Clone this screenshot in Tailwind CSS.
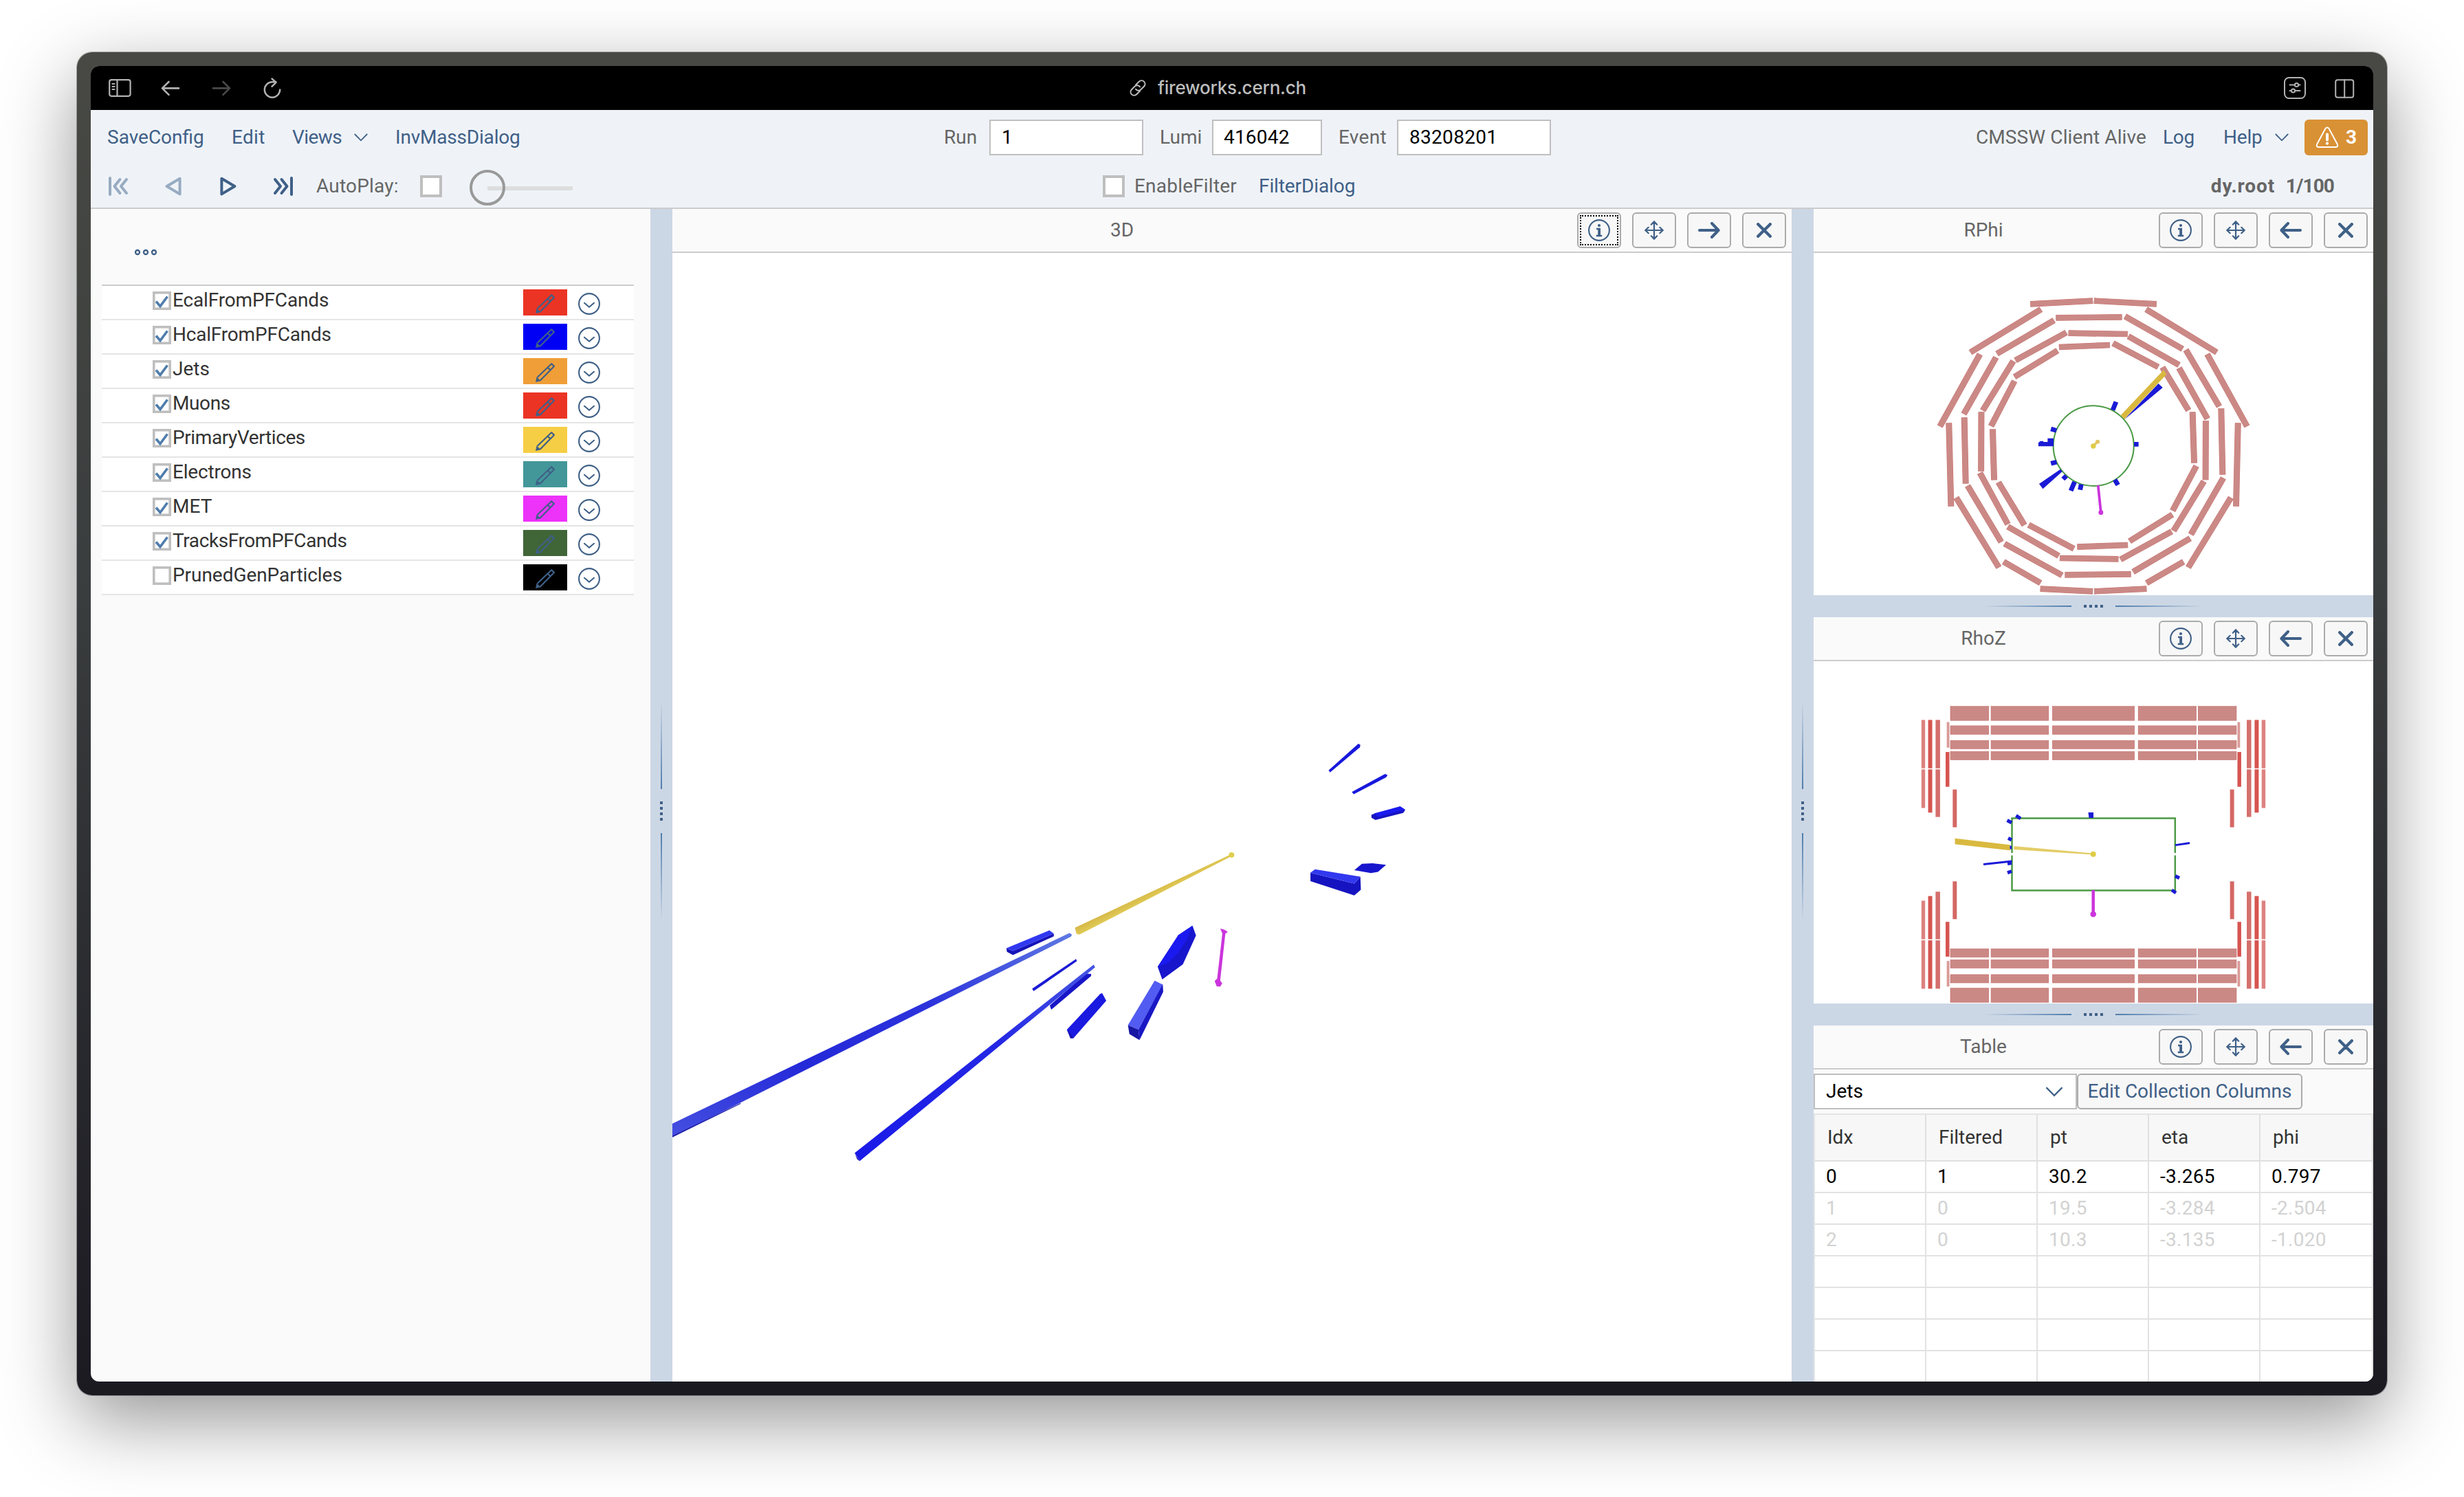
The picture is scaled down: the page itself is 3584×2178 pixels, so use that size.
<!DOCTYPE html>
<html lang="en">
<head>
<meta charset="utf-8">
<title>fireworks.cern.ch</title>
<script src="https://cdn.jsdelivr.net/npm/@tailwindcss/browser@4"></script>
</head>
<body class="h-[2178px] w-[3584px] overflow-hidden bg-white px-[112px] pt-[76px] font-[Roboto,sans-serif] text-[28px] leading-[32px] text-[#666666]">

<svg class="hidden">
  <defs>
    <symbol id="i-info" viewBox="0 0 32 32"><circle cx="16" cy="16" r="14.9" fill="none" stroke="currentColor" stroke-width="2.1"/><circle cx="16" cy="9" r="2.1" fill="currentColor"/><path d="M12 12.8h6v10h2.2v2.4h-8.4v-2.4h2.4v-7.6H12z" fill="currentColor"/></symbol>
    <symbol id="i-move" viewBox="0 0 28 28"><path d="M14 1.5v25M1.5 14h25M9.8 5.7 14 1.3l4.2 4.4M9.8 22.3l4.2 4.4 4.2-4.4M5.7 9.8 1.3 14l4.4 4.2M22.3 9.8l4.4 4.2-4.4 4.2" fill="none" stroke="currentColor" stroke-width="2.2" stroke-linecap="round"/></symbol>
    <symbol id="i-left" viewBox="0 0 32 24"><path d="M30 12H3M12 2 2.4 12 12 22" fill="none" stroke="currentColor" stroke-width="4" stroke-linecap="round" stroke-linejoin="round"/></symbol>
    <symbol id="i-right" viewBox="0 0 32 24"><path d="M2 12h27M20 2l9.600 10L20 22" fill="none" stroke="currentColor" stroke-width="4" stroke-linecap="round" stroke-linejoin="round"/></symbol>
    <symbol id="i-close" viewBox="0 0 22 22"><path d="M2.200 2.200 19.800 19.800M19.800 2.200 2.200 19.800" fill="none" stroke="currentColor" stroke-width="4.300" stroke-linecap="round"/></symbol>
    <symbol id="i-chev" viewBox="0 0 20 12"><path d="M1.300 1.500 10 10.300 18.700 1.500" fill="none" stroke="currentColor" stroke-width="1.800" stroke-linecap="round"/></symbol>
    <symbol id="i-pencil" viewBox="-1 -1 30 30"><path d="M2.500 21 23.200 1.200 26.900 4.900 6.800 25.500M17.600 6.600l4.200 4.200" fill="none" stroke="currentColor" stroke-width="2.200" stroke-linejoin="round"/><path d="M1.500 20.500 8 26.300 0 28z" fill="currentColor"/></symbol>
    <symbol id="i-down" viewBox="0 0 32 32"><circle cx="16" cy="16" r="14.900" fill="none" stroke="currentColor" stroke-width="2.100"/><path d="M9 14.800 16 20.800 23 14.800" fill="none" stroke="currentColor" stroke-width="2.100" stroke-linecap="round" stroke-linejoin="round"/></symbol>
  </defs>
</svg>

<div class="h-[1954px] w-[3360px] rounded-[22px] bg-linear-to-b from-[#484944] from-0% via-[#3a3d3e] via-40% to-[#1b1a21] to-100% p-[20px] shadow-[0_36px_110px_rgba(0,0,0,0.42),0_0_0_1px_#b4b4b4]">
<div class="flex h-[1914px] w-[3320px] flex-col overflow-hidden rounded-[12px] bg-[#fafafa]">

  <!-- browser bar -->
  <div class="relative flex h-[64px] shrink-0 items-center justify-between bg-black pr-[27px] pl-[26px] text-[#b2b2b2]">
    <svg class="h-[40px] w-[260px]" viewBox="158 108 260 40" fill="none" stroke="currentColor" stroke-width="2.200" stroke-linecap="round" stroke-linejoin="round">
      <rect x="159.200" y="116.200" width="30.400" height="23.600" rx="3"/><path d="M170.500 116v24M163.500 122h3M163.500 126h3M163.500 130h3"/>
      <path d="M260 128.400H236.500M245.500 119l-9.500 9.400 9.500 9.400" stroke-width="2.600"/>
      <path d="M310 128.400h23.500M324.500 119l9.500 9.400-9.500 9.400" stroke="#4a4a4a" stroke-width="2.600"/>
      <path d="M407.200 130.500a11.200 11.200 0 1 1-11.200-11.200h5.500M395.500 114.500l6 5.300-6 6" stroke-width="2.400"/>
    </svg>
    <div class="absolute inset-x-0 flex items-center justify-center gap-[16px] pr-[42px] font-[Inter,sans-serif] text-[26px] font-medium tracking-[-0.2px] text-[#bdbdbd]">
      <svg class="h-[26px] w-[26px]" viewBox="0 0 26 26" fill="none" stroke="currentColor" stroke-width="2" stroke-linecap="round"><path d="M10 8.500 14.800 3.700a5 5 0 0 1 7.200 7.100L17.500 15.300a5 5 0 0 1-7.600-.6M16 17.500 11.200 22.300a5 5 0 0 1-7.200-7.100L8.500 10.700a5 5 0 0 1 7.600.6"/></svg>
      <span>fireworks.cern.ch</span>
    </div>
    <svg class="h-[40px] w-[104px]" viewBox="3321 108 104 40" fill="none" stroke="currentColor" stroke-width="2" stroke-linecap="round">
      <rect x="3323" y="113" width="30" height="30" rx="6.500"/><path d="M3330.500 123.500h7M3343.500 123.500h2M3330.500 132h2M3338.500 132h7"/><circle cx="3340.500" cy="123.500" r="2.600"/><circle cx="3335.500" cy="132" r="2.600"/>
      <rect x="3397.200" y="116.200" width="26" height="25.600" rx="3"/><path d="M3410.200 116v26"/>
    </svg>
  </div>

  <!-- application toolbar -->
  <div class="flex h-[144px] shrink-0 flex-col border-b-2 border-[#cccccc] bg-[#eff3f8]">
    <div class="flex h-[80px] items-center">
      <div class="flex w-[1241px] items-center pl-[24px] text-[#3f6087]">
        <span class="w-[180px]">SaveConfig</span>
        <span class="w-[89px] pl-[1px] tracking-[0.300px]">Edit</span>
        <span class="w-[90px] tracking-[-0.600px]">Views</span>
        <svg class="h-[12px] w-[20px]"><use href="#i-chev"/></svg>
        <span class="ml-[40px] tracking-[-0.200px]">InvMassDialog</span>
      </div>
      <div class="flex items-center">
        <span class="w-[66px]">Run</span>
        <div class="h-[52px] w-[224px] border-2 border-[#bfbfbf] bg-white px-[16px] py-[8px] text-black">1</div>
        <span class="ml-[24px] w-[76px]">Lumi</span>
        <div class="h-[52px] w-[160px] border-2 border-[#bfbfbf] bg-white px-[15px] py-[8px] tracking-[0.200px] text-black">416042</div>
        <span class="ml-[24px] w-[85px] tracking-[0.300px]">Event</span>
        <div class="h-[52px] w-[224px] border-2 border-[#bfbfbf] bg-white px-[16px] py-[8px] tracking-[0.300px] text-black">83208201</div>
      </div>
      <div class="flex flex-1 items-center justify-end pr-[8px] text-[#3f6087]">
        <span class="w-[272px] tracking-[0.100px] text-[#666666]">CMSSW Client Alive</span>
        <span class="w-[88px] tracking-[-0.300px]">Log</span>
        <span class="w-[75px] tracking-[-0.200px]">Help</span>
        <svg class="h-[12px] w-[20px]"><use href="#i-chev"/></svg>
        <div class="ml-[23px] flex h-[52px] w-[92px] items-center rounded-[6px] bg-[#d99135] pl-[16px] font-bold text-white">
          <svg class="h-[32px] w-[34px]" viewBox="0 0 34 32"><path d="M14.200 3.500 2.200 25.800q-1.600 3.900 2.300 4.200h25q3.900-.3 2.300-4.200L19.800 3.500q-2.800-3.800-5.600 0z" fill="none" stroke="currentColor" stroke-width="2"/><path d="M17 11.500v8" stroke="currentColor" stroke-width="4" stroke-linecap="round"/><circle cx="17" cy="24.700" r="2.100" fill="currentColor"/></svg>
          <span class="ml-[10px]">3</span>
        </div>
      </div>
    </div>
    <div class="flex h-[62px] items-center">
      <div class="flex w-[1472px] items-center">
        <svg class="h-[32px] w-[300px]" viewBox="132 255 300 32" fill="none" stroke="#3f6087" stroke-width="4" stroke-linecap="round" stroke-linejoin="round">
          <g stroke="#97abc1"><path d="M160 259v24M174.500 261l-8 10 8 10M184 261l-8 10 8 10"/><path d="M261.600 259.800v22.600L242.600 271z"/></g>
          <path d="M322.400 259.800v22.600L341.400 271z"/><path d="M424 259v24M400 261l8 10-8 10M409.500 261l8 10-8 10"/>
        </svg>
        <span class="ml-[28px] w-[151px] tracking-[0.200px]">AutoPlay:</span>
        <div class="h-[32px] w-[32px] border-4 border-[#bfbfbf] bg-white"></div>
        <svg class="ml-[38px] h-[56px] w-[154px]" viewBox="681 243 154 56"><rect x="709" y="271" width="124" height="6" fill="#dddddd"/><circle cx="709" cy="273" r="24" fill="none" stroke="#999999" stroke-width="4"/></svg>
      </div>
      <div class="h-[32px] w-[32px] border-4 border-[#bfbfbf] bg-white"></div>
      <span class="ml-[14px] w-[181px] tracking-[0.200px]">EnableFilter</span>
      <span class="tracking-[-0.100px] text-[#3f6087]">FilterDialog</span>
      <div class="ml-auto flex pr-[57px] font-bold">
        <span class="w-[109px] tracking-[0.900px]">dy.root</span><span class="tracking-[-0.900px]">1/100</span>
      </div>
    </div>
  </div>

  <!-- split views -->
  <div class="flex h-[1706px]">
    <div class="flex w-[814px] flex-col px-[16px] pt-[58px]">
      <svg class="ml-[46px] h-[10px] w-[36px] text-[#3f6087]" viewBox="0 0 36 10" fill="none" stroke="currentColor" stroke-width="2.300"><circle cx="6" cy="5" r="3"/><circle cx="18" cy="5" r="3"/><circle cx="30" cy="5" r="3"/></svg>
      <div id="tree" class="mt-[42px] w-[774px] border-t-2 border-[#cccccc]"></div>
    </div>

    <div class="vsplit"></div>

    <div class="flex w-[1628px] flex-col bg-white">
      <div class="view-head" data-title="3D" data-dir="right"></div>
      <svg class="h-[1642px] w-[1628px]" viewBox="978 368 1628 1642">
        <defs>
          <linearGradient id="beamA" x1="0" y1="1" x2="1" y2="0"><stop offset="0" stop-color="#4650e0"/><stop offset=".35" stop-color="#2429d8"/><stop offset=".65" stop-color="#2c33dc"/><stop offset="1" stop-color="#5f7ae2"/></linearGradient>
          <linearGradient id="beamB" x1="0" y1="1" x2="1" y2="0"><stop offset="0" stop-color="#1a1ae8"/><stop offset=".6" stop-color="#2428e4"/><stop offset="1" stop-color="#4656e4"/></linearGradient>
          <linearGradient id="jet" x1=".46" y1=".46" x2=".54" y2=".54"><stop offset="0" stop-color="#d6b848"/><stop offset="1" stop-color="#e6d45c"/></linearGradient>
        </defs>
        <g transform="translate(960 1050) scale(.73342 .43367)">
          <path fill="url(#jet)" d="M823 691 1130 447 1137 448 832 714 826 712z"/>
          <ellipse cx="1133.500" cy="447" rx="5.500" ry="9" fill="#e0cf4e"/>
          <path fill="#1614b8" d="M687 760 700 769 781 711 781 720 700 783 688 772z"/><path fill="#3038f0" d="M687 760 772 700 781 711 700 769z"/>
          <path fill="url(#beamA)" d="M20 1352 812 709 817 714 815 721 20 1397z"/><path fill="#2020a8" d="M20 1393 160 1279 160 1282 20 1398z"/>
          <path fill="#1a1ad4" d="M738 896 825 796 827 803 741 904z"/>
          <path fill="#1816c8" d="M773 952 845 845 855 846 855 853 776 966z"/>
          <path fill="url(#beamB)" d="M386 1447 860 815 863 824 396 1474z"/>
          <path fill="#1a18a8" d="M386 1447 388 1454 396 1474 391 1468z"/>
          <path fill="#1a1ae0" d="M807 1033 873 913 877 911 885 936 820 1062 814 1062z"/><path fill="#1614b0" d="M807 1033 811 1040 820 1062 814 1062z"/>
          <path fill="#525cf2" d="M928 1018 981 869 997 882 949 1033z"/><path fill="#1a18c4" d="M997 880 998 906 951 1068 949 1033z"/><path fill="#1816a4" d="M928 1018 949 1033 951 1068 931 1048z"/>
          <path fill="#1816cc" d="M987 822 1028 716 1056 684 1063 717 1037 814 996 865z"/><path fill="#1a1af0" d="M987 822 1028 716 1056 684 1045 730 1026 778 1007 810z"/>
          <path fill="#cb35dc" d="M1116 700 1122 700 1111 868 1115 878 1111 889 1104 888 1100 870 1105 862z"/><path fill="#cb35dc" d="M1111 694 1118 697 1126 705 1122 711 1115 709z"/>
          <path fill="#1818dc" d="M1326 163 1385 74 1389 78 1388 86 1329 170z"/>
          <path fill="#1818dc" d="M1372 236 1438 175 1443 179 1440 187 1376 243z"/>
          <path fill="#1614c0" d="M1411 312 1468 284 1478 296 1474 306 1419 330 1411 322z"/><path fill="#1a1af0" d="M1416 308 1468 284 1478 295 1424 319z"/>
          <path fill="#1816cc" d="M1377 498 1392 477 1413 475 1440 480 1424 504 1410 508z"/>
          <path fill="#1614c0" d="M1290 507 1377 543 1389 520 1390 564 1377 583 1290 535z"/><path fill="#3238ee" d="M1290 507 1299 495 1389 520 1377 543z"/>
        </g>
      </svg>
    </div>

    <div class="vsplit"></div>

    <div class="flex w-[814px] flex-col">
      <div class="view-head" data-title="RPhi" data-dir="left"></div>
      <svg class="h-[498px] w-[814px] shrink-0 bg-white" viewBox="2638 368 814 498">
        <g transform="translate(2780 400) scale(.34439 .33333)">
          <g id="rings" fill="none"></g>
          <ellipse cx="770" cy="746" rx="170" ry="175" fill="none" stroke="#4b9a45" stroke-width="6"/>
          <path stroke="#1a1ad6" stroke-width="20" fill="none" d="M865 554 851 590M960 739H941M590 672 613 679M590 823 614 817M641 891 655 877M674 942 690 903M713 938 718 914M860 894 873 917"/>
          <path fill="#1a1ad6" d="M537 733 545 725H558V729H576V713H601V748H537zM540 912 556 934 638 858 630 848zM898 633 1044 474 1062 492z"/>
          <path fill="#d9b93f" d="M885 612 1066 415 1078 434 900 630z"/>
          <path stroke="#cb35dc" stroke-width="11" d="M789 918 801 1037"/><circle cx="801" cy="1037" r="10" fill="#cb35dc"/>
          <path stroke="#e2c665" stroke-width="10" d="M769 746 788 727"/><circle cx="787" cy="728" r="9" fill="#e2c665"/><circle cx="769" cy="747" r="11" fill="#dfcc48"/>
        </g>
      </svg>
      <div class="hsplit"></div>
      <div class="view-head" data-title="RhoZ" data-dir="left"></div>
      <svg class="h-[498px] w-[814px] shrink-0 bg-white" viewBox="2638 962 814 498">
        <g transform="translate(2630 860) scale(.54209 .39541)">
          <g id="barrel" fill="#cb8986" stroke="#c77370" stroke-width="1.600"></g>
          <g id="endcap"></g>
          <path fill="#d9b93f" d="M394 910 542 934V954L394 931z"/>
          <path fill="#e3cd66" d="M552 938 765 965V970L552 951z"/>
        </g>
        <path fill="none" stroke="#4b9a45" stroke-width="2.500" d="M2926.500 1241V1190.500H3163.800V1241M3163.800 1244.500V1295.500H2926.500V1244.500"/>
        <circle cx="3044.700" cy="1242.800" r="4" fill="#dfcc48"/>
        <path fill="none" stroke="#1a1ad6" stroke-width="5" d="M2932.500 1186.500 2939 1191M2919.500 1193.500 2926 1197M2921 1219.500 2926 1222M2923.500 1233H2926M2920 1256.500 2926 1255.500M2920 1269.800 2926 1267.500M3164 1274.500 3170 1277.500M3159 1295 3165 1299"/>
        <path fill="#1a1ad6" d="M3037.500 1182h7.500v8h-6.500z"/>
        <path fill="none" stroke="#1a1ad6" stroke-width="2.800" d="M2885 1257.500 2926.500 1253M3164 1229.700 3185 1226.500"/>
        <path stroke="#cb35dc" stroke-width="4.500" d="M3044.700 1295V1330"/><circle cx="3044.700" cy="1330" r="4.300" fill="#cb35dc"/>
      </svg>
      <div class="hsplit"></div>
      <div class="view-head" data-title="Table" data-dir="left"></div>
      <div class="flex h-[64px] shrink-0 items-center bg-[#fafafa]">
        <div class="flex h-[52px] w-[383px] items-center justify-between border-2 border-[#bfbfbf] bg-white pr-[18px] pl-[16px] text-black">Jets<svg class="h-[15px] w-[26px] text-[#3f6087]"><use href="#i-chev"/></svg></div>
        <div class="flex h-[52px] w-[328px] items-center justify-center rounded-[6px] border-2 border-[#ababab] bg-[#f7f7f7] text-[#3f6087]">Edit Collection Columns</div>
      </div>
      <div id="table" class="grid w-[814px] grid-cols-[162px_162px_162px_162px_164px] border-t-2 border-l-2 border-[#e5e5e5]"></div>
    </div>
  </div>
</div>
</div>

<script>
// tree of event collections
const items = [['EcalFromPFCands','#eb3424',1,'tracking-[-0.150px]'],['HcalFromPFCands','#0000f5',1,'tracking-[-0.200px]'],['Jets','#f09f38',1,''],['Muons','#eb3424',1,'tracking-[-0.400px]'],['PrimaryVertices','#f6ce45',1,'tracking-[-0.400px]'],['Electrons','#439799',1,'tracking-[-0.200px]'],['MET','#ed32fa',1,''],['TracksFromPFCands','#406537',1,'tracking-[-0.400px]'],['PrunedGenParticles','#000000',0,'tracking-[-0.050px]']];
document.getElementById('tree').innerHTML = items.map(([n, c, on, t]) => `
  <div class="flex h-[50px] items-start border-b-2 border-[#e5e5e5] bg-white pl-[74px] text-[#333333]">
    <svg class="mt-[8px] h-[27px] w-[27px]" viewBox="0 0 27 27"><rect x="1.800" y="1.800" width="23.400" height="23.400" fill="#fff" stroke="#bfbfbf" stroke-width="3.600"/>${on ? '<path d="M5 14.500 11 21.500 21.500 7.500" fill="none" stroke="#4f7dac" stroke-width="3.600"/>' : ''}</svg>
    <span class="mt-[5px] ml-[2px] w-[510px] ${t}">${n}</span>
    <div class="mt-[5px] flex h-[38px] w-[64px] items-center justify-center text-[#3f6087]" style="background:${c}"><svg class="mt-[4px] h-[30px] w-[30px]"><use href="#i-pencil"/></svg></div>
    <svg class="mt-[10px] ml-[16px] h-[32px] w-[32px] text-[#3f6087]"><use href="#i-down"/></svg>
  </div>`).join('');

// view headers
document.querySelectorAll('.view-head').forEach(h => {
  const right = h.dataset.dir === 'right';
  h.className = 'flex h-[64px] shrink-0 items-center border-b-2 border-[#cccccc] bg-[#fafafa] pr-[8px]';
  const icons = [['i-info','h-[32px] w-[32px]'],['i-move','h-[28px] w-[28px]'],[right ? 'i-right' : 'i-left','h-[24px] w-[32px]'],['i-close','h-[22px] w-[22px]']];
  h.innerHTML = `<div class="mr-[8px] flex-1 text-center">${h.dataset.title}</div><div class="flex gap-[16px]">` + icons.map(([id, s], i) =>
    `<div class="relative flex h-[52px] w-[64px] items-center justify-center rounded-[6px] border-2 border-[#ababab] bg-[#f7f7f7] text-[#3f6087]"><svg class="${s}"><use href="#${id}"/></svg>${right && i === 0 ? '<div class="absolute inset-[2px] border-2 border-dotted border-black"></div>' : ''}</div>`).join('') + '</div>';
});

// splitters
const dots = '<i class="block h-[4px] w-[4px] bg-[#3f6087]"></i>'.repeat(4);
document.querySelectorAll('.vsplit').forEach(s => {
  s.className = 'flex h-[1752px] w-[32px] shrink-0 flex-col items-center justify-center bg-[#ccd7e5]';
  s.innerHTML = `<div class="h-[128px] w-[2px] bg-linear-to-t from-[#4f7dac] to-[#ccd7e5]"></div><div class="flex flex-col gap-[4px] py-[18px]">${dots}</div><div class="h-[128px] w-[2px] bg-linear-to-b from-[#4f7dac] to-[#ccd7e5]"></div>`;
});
document.querySelectorAll('.hsplit').forEach(s => {
  s.className = 'flex h-[32px] shrink-0 items-center justify-center bg-[#ccd7e5]';
  s.innerHTML = `<div class="h-[2px] w-[128px] bg-linear-to-l from-[#4f7dac] to-[#ccd7e5]"></div><div class="flex gap-[4px] px-[18px]">${dots}</div><div class="h-[2px] w-[128px] bg-linear-to-r from-[#4f7dac] to-[#ccd7e5]"></div>`;
});

// muon barrel chambers, transverse view
const bars = 'M503 127 767 113M772 113 1036 127M992 150 1290 338M1250 346 1418 661M1380 646 1372 1010M1350 972 1170 1277M1150 1252 994 1345M994 1370 773 1381M767 1381 545 1370M546 1345 390 1252M370 1277 190 972M168 1010 159 646M121 661 290 346M250 338 548 150'
 + 'M611 187 890 184M903 181 1146 323M1160 327 1301 574M1309 582 1315 872M1318 886 1181 1133M1178 1150 937 1296M928 1306 649 1309M637 1311 394 1173M380 1166 238 920M230 911 224 622M222 607 358 360M362 344 603 198'
 + 'M664 254 914 258M917 268 1131 393M1131 406 1251 628M1244 636 1243 895M1236 901 1108 1117M1100 1120 884 1242M875 1240 627 1236M623 1226 408 1099M408 1088 290 864M295 857 296 598M302 592 431 376M440 373 655 251'
 + 'M624 315 839 306M852 298 1043 402M1061 403 1171 591M1188 598 1195 821M1204 834 1104 1029M1103 1046 922 1162M915 1179 701 1187M687 1195 496 1091M478 1092 368 905M350 895 344 673M337 660 436 463M436 445 618 330';
document.getElementById('rings').innerHTML = `<path stroke="#c77370" stroke-width="26" d="${bars}"/><path stroke="#cb8986" stroke-width="23" d="${bars}"/>`;

// muon chambers, longitudinal view
const cols = [[382,484],[491,645],[656,875],[886,1041],[1047,1149]];
const rows = [[424,476],[495.500,527],[549.500,580.500],[590,621],[1316,1347],[1356.500,1387],[1411,1441.500],[1461,1513]];
document.getElementById('barrel').innerHTML = rows.flatMap(([a, b]) => cols.map(([c, d]) => `<rect x="${c}" y="${a}" width="${d - c}" height="${b - a}"/>`)).join('');
const caps = [[304,314,474,652,'#dd8280'],[304,314,656,798,'#dd8280'],[322,333,474,652,'#d65450'],[322,333,656,815,'#d65450'],[342,354,474,652,'#d46f6c'],[342,354,656,831,'#d46f6c'],[372,379,482,576,'#d99a98'],[369,379,592,720,'#d65450'],[388,399,730,869,'#d46764']];
const r = (x, y, w, h, f) => `<rect x="${x}" y="${y}" width="${w}" height="${h}" fill="${f}"/>`;
document.getElementById('endcap').innerHTML = caps.map(([a, b, c, d, f]) =>
  r(a, c, b - a, d - c, f) + r(1531 - b, c, b - a, d - c, f) + r(a, 1937 - d, b - a, d - c, f) + r(1531 - b, 1937 - d, b - a, d - c, f)).join('');

// collection table
const data = [['0','1','30.2','-3.265','0.797'],['1','0','19.5','-3.284','-2.504'],['2','0','10.3','-3.135','-1.020'],['','','','',''],['','','','',''],['','','','',''],['','','','','']];
document.getElementById('table').innerHTML =
  ['Idx','Filtered','pt','eta','phi'].map(t => `<div class="flex h-[68px] items-center border-r-2 border-b-2 border-[#e0e0e0] bg-[#f7f7f7] pl-[18px] text-[#333333]">${t}</div>`).join('') +
  data.flatMap((row, i) => row.map(t => `<div class="flex h-[46px] items-center border-r-2 border-b-2 border-[#e2e2e2] bg-white pl-[16px] tracking-[0.300px] ${i ? 'text-[#d2d2d2]' : 'text-black'}">${t}</div>`)).join('');
</script>
</body>
</html>
